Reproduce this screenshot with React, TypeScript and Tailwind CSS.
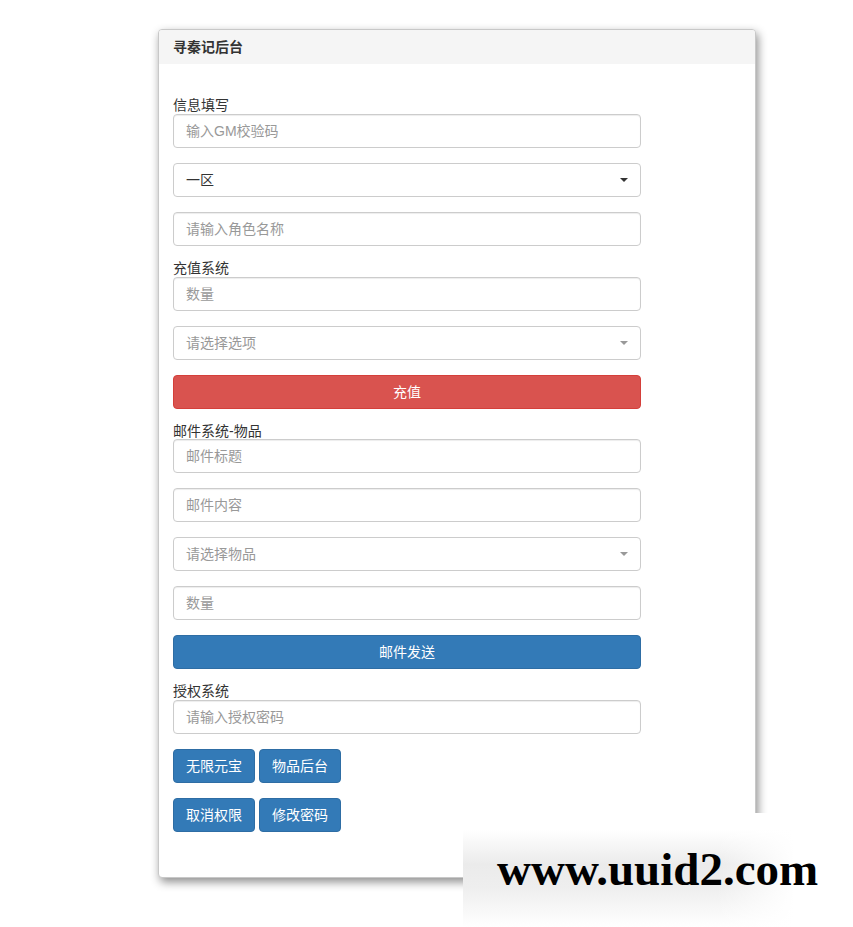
import React from "react";

const font = { fontFamily: '"Liberation Sans", "Noto Sans CJK SC", sans-serif' };

function Label({ children, short }: { children: React.ReactNode; short?: boolean }) {
  return (
    <div className={(short ? "h-[15px] " : "h-[16px] ") + "text-[14px] leading-[15px] text-[#333]"}>
      {children}
    </div>
  );
}

function Input({ placeholder }: { placeholder: string }) {
  return (
    <div className="mb-[15px] flex h-[34px] items-center rounded-[4px] border border-[#ccc] bg-white px-[12px] text-[14px] text-[#999] shadow-[inset_0_1px_1px_rgba(0,0,0,0.075)]">
      {placeholder}
    </div>
  );
}

function Select({ text, dark }: { text: string; dark?: boolean }) {
  return (
    <div
      className={
        "mb-[15px] flex h-[34px] items-center justify-between rounded-[4px] border border-[#ccc] bg-white pl-[12px] pr-[12px] text-[14px] " +
        (dark ? "text-[#333]" : "text-[#999]")
      }
    >
      <span>{text}</span>
      <span
        className={
          "h-0 w-0 border-x-[4px] border-t-[4px] border-x-transparent " +
          (dark ? "border-t-[#333]" : "border-t-[#999]")
        }
      />
    </div>
  );
}

function BlockButton({ text, red }: { text: string; red?: boolean }) {
  return (
    <div
      className={
        "mb-[15px] flex h-[34px] items-center justify-center rounded-[4px] border text-[14px] text-white " +
        (red ? "border-[#d43f3a] bg-[#d9534f]" : "border-[#2e6da4] bg-[#337ab7]")
      }
    >
      {text}
    </div>
  );
}

function SmallButton({ text }: { text: string }) {
  return (
    <div className="flex h-[34px] w-[82px] items-center justify-center rounded-[4px] border border-[#2e6da4] bg-[#337ab7] text-[14px] text-white">
      {text}
    </div>
  );
}

export default function App() {
  return (
    <div className="relative min-h-[927px] w-[853px] overflow-hidden bg-white" style={font}>
      <div className="pt-[29px]">
        <div className="ml-[158px] w-[598px] overflow-hidden rounded-[4px] border border-[#c8c8c8] bg-white shadow-[2px_4px_10px_rgba(0,0,0,0.45)]">
          <div className="flex h-[34px] items-center bg-[#f5f5f5] px-[14px] text-[14px] font-bold text-[#333]">
            寻秦记后台
          </div>
          <div className="w-[496px] px-[14px] pb-[30px] pt-[34px]">
            <Label>信息填写</Label>
            <Input placeholder="输入GM校验码" />
            <Select text="一区" dark />
            <Input placeholder="请输入角色名称" />
            <Label>充值系统</Label>
            <Input placeholder="数量" />
            <Select text="请选择选项" />
            <BlockButton text="充值" red />
            <Label short>邮件系统-物品</Label>
            <Input placeholder="邮件标题" />
            <Input placeholder="邮件内容" />
            <Select text="请选择物品" />
            <Input placeholder="数量" />
            <BlockButton text="邮件发送" />
            <Label>授权系统</Label>
            <Input placeholder="请输入授权密码" />
            <div className="mb-[15px] flex gap-[4px]">
              <SmallButton text="无限元宝" />
              <SmallButton text="物品后台" />
            </div>
            <div className="mb-[15px] flex gap-[4px]">
              <SmallButton text="取消权限" />
              <SmallButton text="修改密码" />
            </div>
          </div>
        </div>
      </div>
      <div className="absolute bottom-0 left-[463px] right-0 top-[813px] flex items-center bg-[linear-gradient(to_right,rgba(255,255,255,0)_65%,#ffffff_85%),linear-gradient(to_bottom,#ffffff_15%,#ebebeb_45%,#eeeeee_65%,#ffffff_100%)] pl-[34px] pb-[2px]">
        <span
          className="text-[47px] font-bold leading-none text-black"
          style={{ fontFamily: '"Liberation Serif", serif' }}
        >
          www.uuid2.com
        </span>
      </div>
    </div>
  );
}
